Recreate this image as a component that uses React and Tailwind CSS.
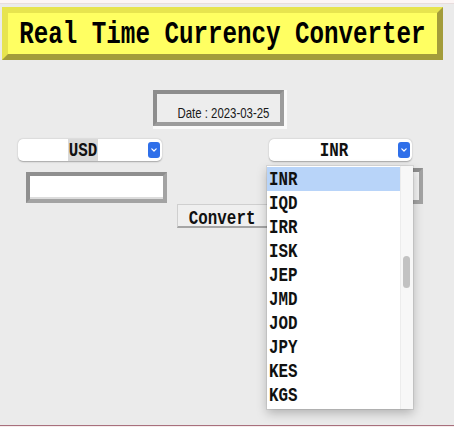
export default function App() {
  const items = ["INR", "IQD", "IRR", "ISK", "JEP", "JMD", "JOD", "JPY", "KES", "KGS"];

  const Chevron = () => (
    <div className="mr-[2px] w-[12px] h-[16px] shrink-0 rounded-[3px] bg-[#2f6fe9] flex items-center justify-center">
      <svg width="6" height="4" viewBox="0 0 6 4">
        <path d="M0.8 0.8 L3 3 L5.2 0.8" stroke="white" strokeWidth="1.2" fill="none" strokeLinecap="round" strokeLinejoin="round" />
      </svg>
    </div>
  );

  return (
    <div className="relative w-[454px] h-[427px] overflow-hidden bg-[#ebebeb] flex flex-col">
      <div className="h-[4px] shrink-0 bg-[#fcf5f5] border-b border-[#e8dddd]" />

      {/* Title */}
      <div className="mt-[3px] ml-[2px] w-[441px] h-[53px] shrink-0 border-[6px] border-t-[#e7e44f] border-l-[#e7e44f] border-b-[#a39c3b] border-r-[#a39c3b] bg-[#ffff62] flex items-center justify-center">
        <span className="inline-block whitespace-nowrap text-[31px] leading-none text-black font-['Liberation_Mono',monospace] font-bold scale-x-[0.78] pt-[1px]">
          Real Time Currency Converter
        </span>
      </div>

      {/* Date */}
      <div className="mt-[30px] ml-[153px] w-[134px] h-[39px] shrink-0 border-r-[3px] border-b-[3px] border-[#fafafa]">
        <div className="w-full h-full border-4 border-t-[#8d8d8d] border-l-[#8d8d8d] border-r-[#9c9c9c] border-b-[#9c9c9c] bg-[#ededed] flex items-center justify-center pt-[8px] pl-[9px]">
          <span className="inline-block whitespace-nowrap font-['Liberation_Sans',Arial,sans-serif] text-[15px] leading-none text-[#1a1a1a] scale-x-[0.76]">
            Date : 2023-03-25
          </span>
        </div>
      </div>

      {/* Selects */}
      <div className="mt-[10px] h-[22px] shrink-0 flex">
        <div className="ml-[18px] w-[144px] h-[22px] bg-white rounded-[5px] shadow-[0_0.5px_1.5px_rgba(0,0,0,0.3)] flex items-center">
          <div className="flex-1 h-full flex justify-center">
            <div className="w-[30px] h-full bg-[#d9d9d9] flex items-center justify-center">
              <span className="inline-block whitespace-nowrap text-[21px] leading-none text-[#111] font-['Liberation_Mono',monospace] font-bold scale-x-[0.755]">USD</span>
            </div>
          </div>
          <Chevron />
        </div>
        <div className="ml-[107px] w-[143px] h-[22px] bg-white rounded-[5px] shadow-[0_0.5px_1.5px_rgba(0,0,0,0.3)] flex items-center">
          <div className="flex-1 h-full flex items-center justify-center">
            <span className="inline-block whitespace-nowrap text-[21px] leading-none text-[#111] font-['Liberation_Mono',monospace] font-bold scale-x-[0.755]">INR</span>
          </div>
          <Chevron />
        </div>
      </div>

      {/* Inputs */}
      <div className="mt-[7px] h-[36px] shrink-0 flex items-start">
        <div className="mt-[4px] ml-[26px] w-[141px] h-[31px] border-4 border-t-[#8f8f8f] border-l-[#8f8f8f] border-b-[#a3a3a3] border-r-[#a3a3a3] bg-white shadow-[inset_0_-2px_0_#dcdcdc]" />
        <div className="ml-[115px] w-[141px] h-[36px] border-4 border-t-[#8f8f8f] border-l-[#8f8f8f] border-b-[#a3a3a3] border-r-[#a3a3a3] bg-[#f3f3f3]" />
      </div>

      {/* Convert */}
      <div className="ml-[177px] w-[91px] h-[24px] shrink-0 bg-[#efefef] border border-[#cfcfcf] border-b-2 border-b-[#a5a5a5] flex items-center justify-center pt-[5px]">
        <span className="inline-block whitespace-nowrap text-[21px] leading-none text-[#111] font-['Liberation_Mono',monospace] font-bold scale-x-[0.755]">Convert</span>
      </div>

      <div className="mt-auto h-[1px] shrink-0 bg-[#a86f7c]" />
      <div className="h-[1px] shrink-0 bg-[#f5eded]" />

      {/* Dropdown list */}
      <div className="absolute left-[267px] top-[166px] w-[146px] h-[243px] bg-white flex shadow-[0_0_0_1px_rgba(0,0,0,0.07),0_4px_10px_rgba(0,0,0,0.25)]">
        <div className="w-[133px] pt-[1px] flex flex-col">
          {items.map((c, i) => (
            <div key={c} className={`h-[24px] flex items-center pl-[2px] ${i === 0 ? "bg-[#b8d4f9]" : ""}`}>
              <span className="inline-block origin-left whitespace-nowrap text-[21px] leading-none text-[#111] font-['Liberation_Mono',monospace] font-bold scale-x-[0.755]">{c}</span>
            </div>
          ))}
        </div>
        <div className="relative w-[13px] h-full bg-[#f7f7f7] border-l border-[#ececec]">
          <div className="absolute left-[2px] top-[90px] w-[7px] h-[32px] rounded-full bg-[#c2c2c2]" />
        </div>
      </div>
    </div>
  );
}
